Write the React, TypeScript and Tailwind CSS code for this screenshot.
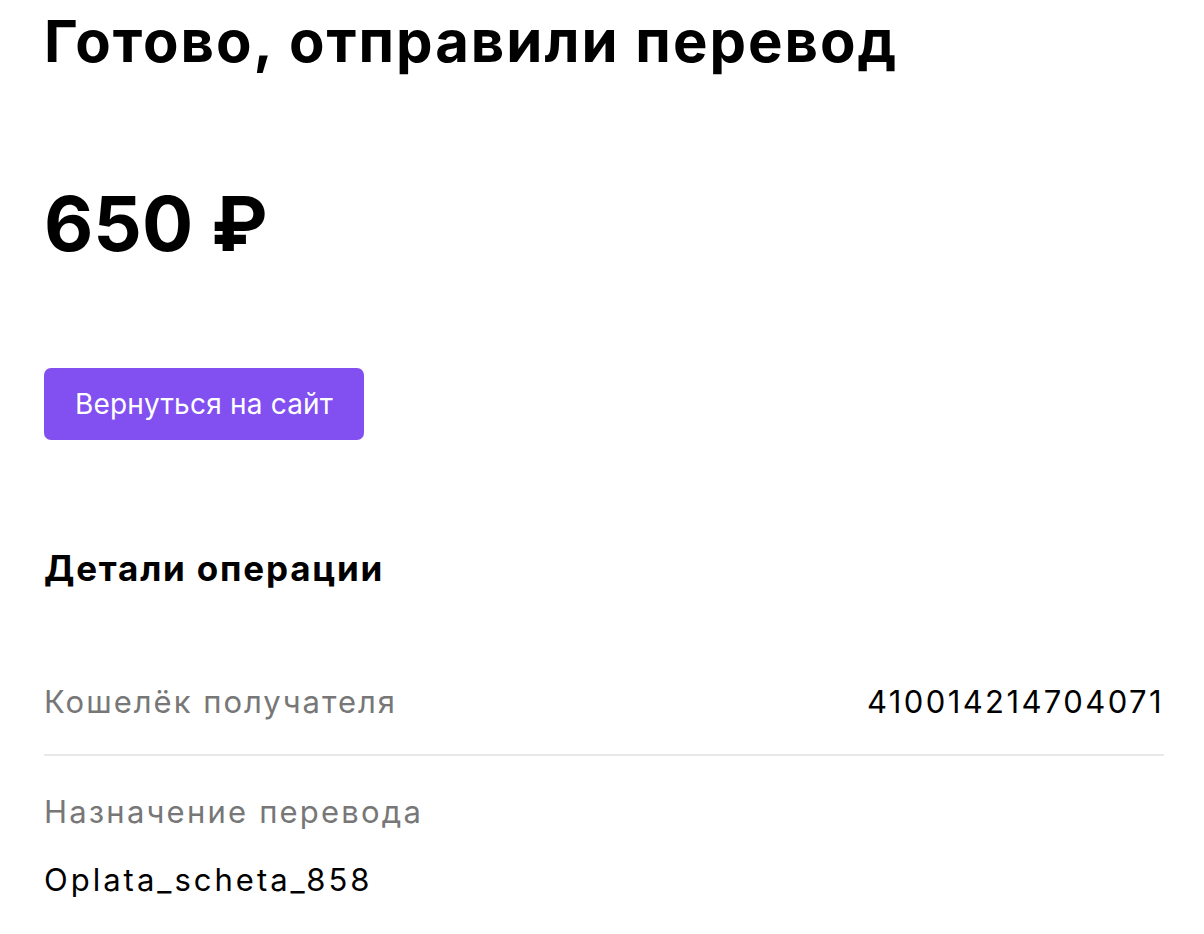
export default function App() {
  return (
    <div className="min-h-[934px] bg-white pl-[44px] pr-[40px] text-black" style={{ fontFamily: "Inter, 'Noto Sans', sans-serif" }}>
      <h1 className="pt-[6px] text-[58px] font-bold leading-[70px] tracking-[2px]">Готово, отправили перевод</h1>
      <div className="mt-[102px] text-[76px] font-bold leading-[90px] tracking-[0px]">650 ₽</div>
      <button className="mt-[100px] flex h-[72px] w-[320px] items-center justify-center rounded-[7px] bg-[#8250f0] text-[28px] text-white tracking-[0.2px]">
        Вернуться на сайт
      </button>
      <h2 className="mt-[104px] text-[35px] font-bold leading-[48px] tracking-[1.8px]">Детали операции</h2>
      <div className="mt-[90px] flex items-center justify-between border-b-2 border-[#e8e8e8] pb-[32px] text-[31px] leading-[40px]">
        <span className="text-[#777777] tracking-[2px]">Кошелёк получателя</span>
        <span className="tracking-[2.4px]">410014214704071</span>
      </div>
      <div className="mt-[36px] text-[31px] leading-[40px] text-[#777777] tracking-[2.2px]">Назначение перевода</div>
      <div className="mt-[28px] text-[31px] leading-[40px] tracking-[3px]">Oplata_scheta_858</div>
    </div>
  );
}
